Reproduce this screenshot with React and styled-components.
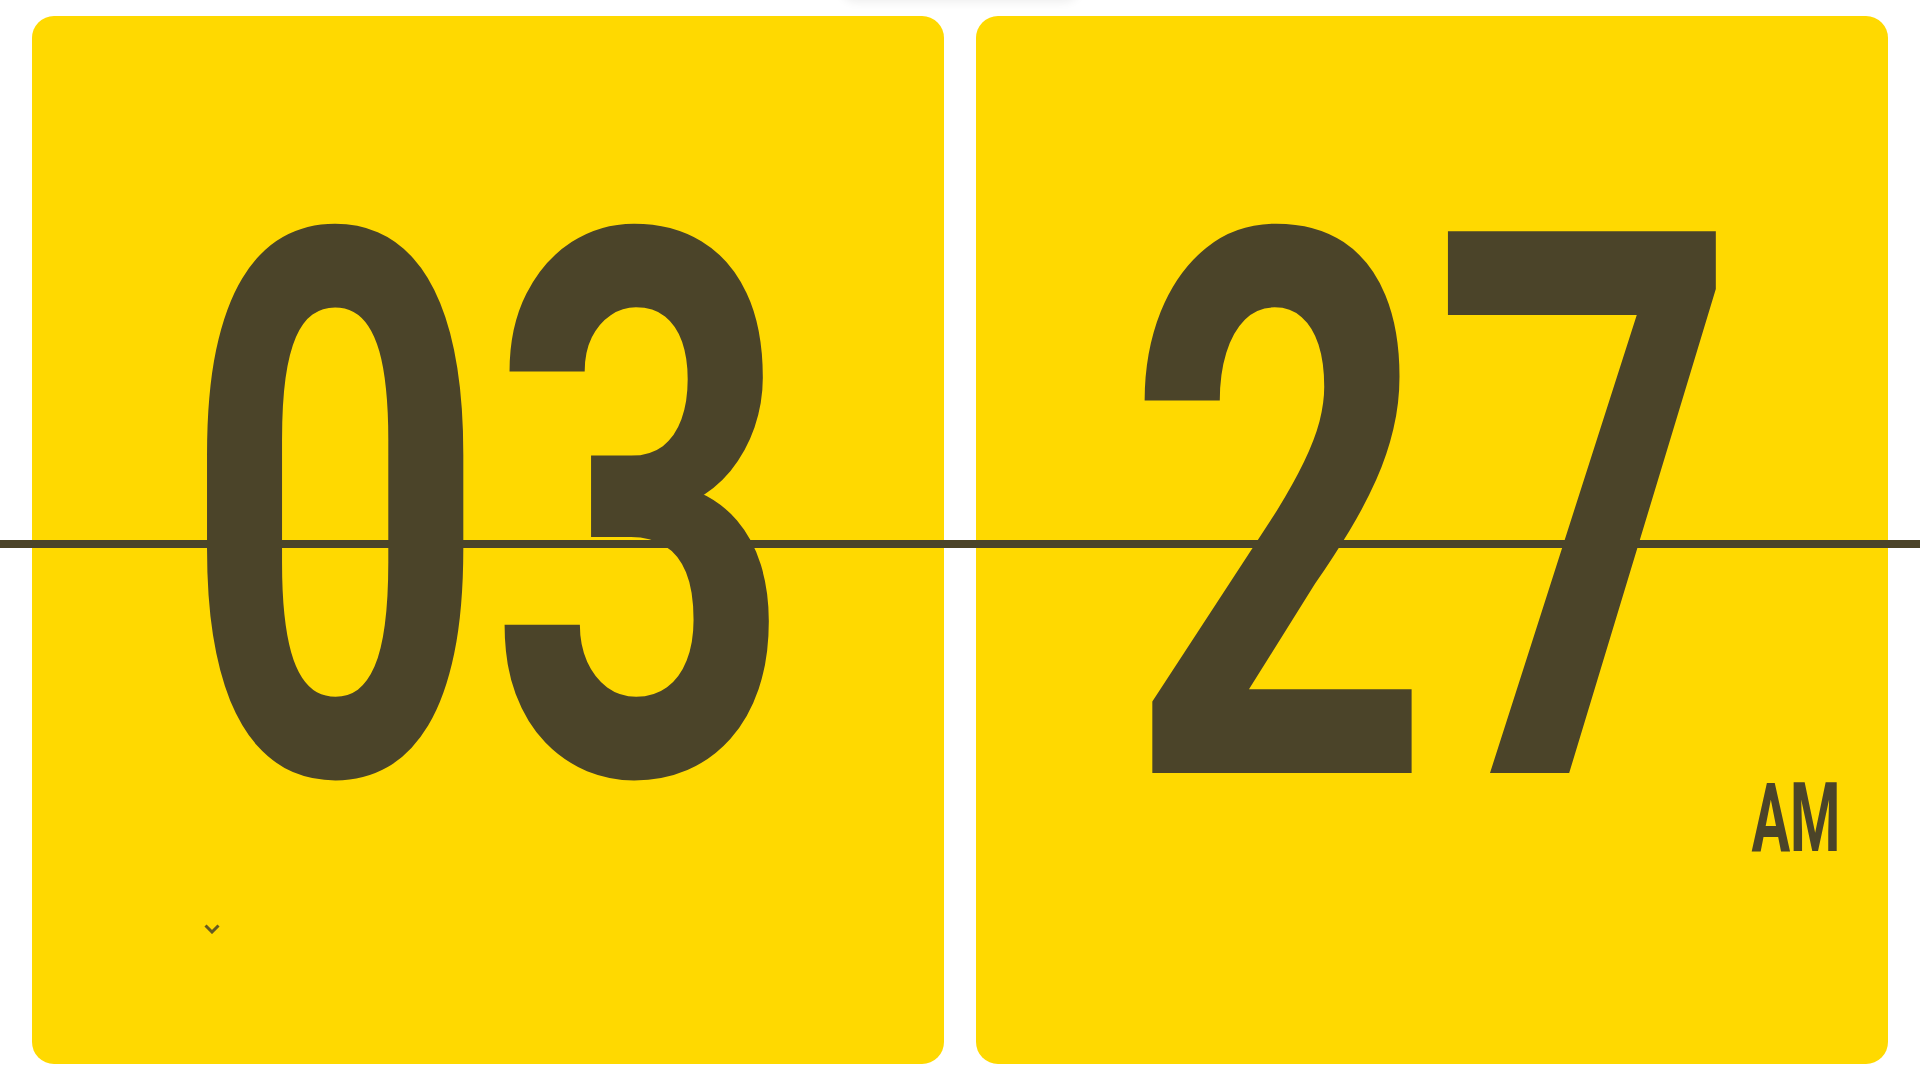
import styled, { createGlobalStyle } from "styled-components";

const GlobalStyle = createGlobalStyle`
    html, body {
        margin: 0;
        padding: 0;
        background: #ffffff;
        overflow: hidden;
    }

    * {
        box-sizing: border-box;
    }
`

const Page = styled.div`
    position: relative;
    display: flex;
    gap: 32px;
    width: 100vw;
    height: 100vh;
    padding: 16px 32px;
    background: #ffffff;
`

// faint shadow of the hidden pull-down tab above the viewport
const TopTab = styled.div`
    position: absolute;
    top: -40px;
    left: 50%;
    width: 240px;
    height: 40px;
    transform: translateX(-50%);
    border-radius: 0 0 16px 16px;
    background: #ffffff;
    box-shadow: 0 2px 10px rgba(0, 0, 0, 0.07);
`

const Card = styled.div`
    position: relative;
    flex: 1;
    display: flex;
    align-items: center;
    justify-content: center;
    padding-bottom: 54px;
    border-radius: 22px;
    background: #ffd900;
    overflow: hidden;
`

const Digits = styled.div`
    font-family: Roboto, "Liberation Sans", sans-serif;
    font-weight: 700;
    font-size: 762px;
    line-height: 1;
    color: #4b4429;
    transform: scaleX(0.7);
    user-select: none;
`

const Meridiem = styled.div`
    position: absolute;
    right: 47px;
    bottom: 198px;
    font-family: Roboto, "Liberation Sans", sans-serif;
    font-weight: 700;
    font-size: 96px;
    line-height: 1;
    color: #4b4429;
    transform: scaleX(0.6);
    transform-origin: right center;
`

const Chevron = styled.svg`
    position: absolute;
    left: 172px;
    top: 908px;
    width: 16px;
    height: 10px;
    opacity: 0.85;
`

const Divider = styled.div`
    position: absolute;
    left: 0;
    right: 0;
    top: 540px;
    height: 8px;
    background: #4b4429;
    z-index: 2;
`

export default function App() {
    return (
        <>
            <GlobalStyle />
            <Page>
                <TopTab />
                <Card>
                    <Digits>03</Digits>
                    <Chevron viewBox="0 0 16 10" fill="none">
                        <path d="M1.5 1.5 L8 8 L14.5 1.5" stroke="#4b4429" strokeWidth="3" />
                    </Chevron>
                </Card>
                <Card>
                    <Digits>27</Digits>
                    <Meridiem>AM</Meridiem>
                </Card>
                <Divider />
            </Page>
        </>
    )
}
